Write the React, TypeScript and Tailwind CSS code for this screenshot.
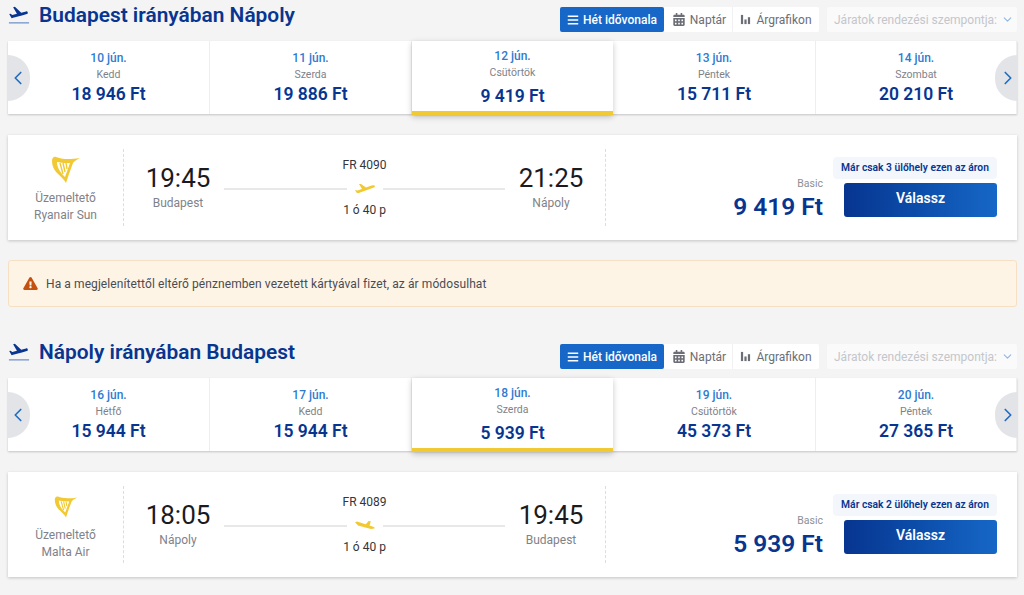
import { ChevronLeft, ChevronRight, ChevronDown } from "lucide-react";
import { FaBars, FaCalendarAlt, FaExclamationTriangle } from "react-icons/fa";

type Day = { date: string; name: string; price: string; active?: boolean };
type Flight = {
  operator: string;
  from: string;
  to: string;
  dep: string;
  arr: string;
  code: string;
  price: string;
  seats: string;
  landing?: boolean;
  logoSmall?: boolean;
};

const PLANE_UP =
  "M21.57 9.14c-.21-.8-1.04-1.28-1.84-1.06L14.42 9.5 7.52 3.07l-1.93.51 4.14 7.17-4.97 1.33-1.97-1.54-1.45.39 1.82 3.16.77 1.33 1.6-.43 5.31-1.42 4.35-1.16 5.31-1.42c.81-.23 1.28-1.05 1.07-1.85z";

function DepartureIcon() {
  return (
    <svg viewBox="0 0 24 24" className="w-[22px] h-[22px] text-[#073590] shrink-0" fill="currentColor">
      <path d={PLANE_UP} />
      <rect x="1" y="20" width="22" height="1.2" fill="#5b83c4" />
    </svg>
  );
}

function RoutePlane({ landing }: { landing?: boolean }) {
  return (
    <svg viewBox="0 0 24 12" className="w-[24px] h-[12px] text-[#f1c933]" fill="currentColor">
      {landing ? (
        <path d="M2 2.2L4 1.4L19.5 6.4Q22.4 7.4 21.4 8.6L18 9L5 5.4ZM15.6 1L17.8 1.3L16.4 6.2L12.2 5Z" />
      ) : (
        <path d="M2 7L4.6 7.6L18.6 2.6Q22 1.6 22 3.2Q22 4.4 19.6 5L5 10.2L3.4 9.6ZM6 1L8 1L13 4.4L9 6Z" />
      )}
    </svg>
  );
}

function Harp({ small }: { small?: boolean }) {
  return (
    <svg viewBox="0 0 30 30" className={small ? "w-[24px] h-[24px]" : "w-[30px] h-[30px]"} fill="none">
      <path d="M1 6C1 3 3 1 5 2c5 2 12 3 24 1-3 2-6 3-7 5l-4 11-3 9c-2-4-6-7-9-10-3-3-5-7-5-12z" fill="#f1c933" />
      <path d="M6 7c4 1 9 1 13 1l-5 14c-3-3-8-8-8-15z" fill="#fff" />
      <path d="M9 8l3 11M12 8l2 9M15 8l1 6" stroke="#f1c933" strokeWidth="1.4" />
    </svg>
  );
}

function Header({ title }: { title: string }) {
  return (
    <div className="h-[41px] flex items-start justify-between">
      <div className="flex items-center gap-[9px] -mt-[2px] h-[34px]">
        <DepartureIcon />
        <h2 className="text-[20.9px] font-semibold text-[#073590] leading-none">{title}</h2>
      </div>
      <div className="flex items-center pt-[7px] text-[12px]">
        <button className="h-[25px] w-[104px] rounded-[2px] bg-[#1667c7] text-white font-medium flex items-center justify-center gap-[4px]">
          <FaBars className="w-[12px] h-[12px]" />
          Hét idővonala
        </button>
        <button className="h-[25px] w-[69px] bg-white border-r border-[#f1f1f1] text-[#6b6e76] flex items-center justify-center gap-[5px] pl-[3px]">
          <FaCalendarAlt className="w-[12px] h-[13px]" />
          Naptár
        </button>
        <button className="h-[25px] w-[86px] bg-white rounded-r-[2px] text-[#6b6e76] flex items-center justify-center gap-[5px]">
          <svg viewBox="0 0 12 12" className="w-[11px] h-[11px]" fill="currentColor">
            <rect x="1" y="1" width="2.4" height="10" />
            <rect x="4.8" y="6" width="2.4" height="5" />
            <rect x="8.6" y="3.5" width="2.4" height="7.5" />
          </svg>
          Árgrafikon
        </button>
        <div className="h-[25px] w-[190px] ml-[8px] bg-[#fafafa] rounded-[2px] text-[#c4c6cb] flex items-center justify-between pl-[7px] pr-[3px]">
          <span className="whitespace-nowrap">Járatok rendezési szempontja:</span>
          <ChevronDown className="w-[13px] h-[13px] text-[#8fb7e6]" />
        </div>
      </div>
    </div>
  );
}

function DayCell({ day }: { day: Day }) {
  if (day.active) {
    return (
      <div className="relative z-10 h-[74px] flex flex-col items-center bg-white border-b-[4px] border-[#f1c933] shadow-[0_2px_6px_rgba(0,0,0,0.22)] pt-[7px]">
        <span className="text-[12px] leading-[16px] font-medium text-[#2f7bd1]">{day.date}</span>
        <span className="text-[10.5px] leading-[14px] mt-[2px] text-[#7f8289]">{day.name}</span>
        <span className="text-[17.5px] leading-[22px] mt-[5px] font-semibold text-[#073590]">{day.price}</span>
      </div>
    );
  }
  return (
    <div className="h-[73px] flex flex-col items-center pt-[9px] border-r border-[#eeeeee] last:border-r-0">
      <span className="text-[12px] leading-[16px] font-medium text-[#2f7bd1]">{day.date}</span>
      <span className="text-[10.5px] leading-[14px] mt-[2px] text-[#7f8289]">{day.name}</span>
      <span className="text-[17.5px] leading-[22px] mt-[1px] font-semibold text-[#073590]">{day.price}</span>
    </div>
  );
}

function DayStrip({ days }: { days: Day[] }) {
  return (
    <div className="relative h-[73px] grid grid-cols-[202px_202px_201px_203px_201px] bg-white shadow-[0_1px_2px_rgba(0,0,0,0.2)]">
      {days.map((d) => (
        <DayCell key={d.date} day={d} />
      ))}
      <button className="absolute z-20 left-0 top-[14px] h-[46px] w-[22px] rounded-r-full bg-[#e3e4e7] flex items-center justify-center">
        <ChevronLeft className="w-[22px] h-[22px] text-[#1f6cc4] -ml-[3px]" strokeWidth={1.8} />
      </button>
      <button className="absolute z-20 right-0 top-[14px] h-[46px] w-[22px] rounded-l-full bg-[#e3e4e7] flex items-center justify-center">
        <ChevronRight className="w-[22px] h-[22px] text-[#1f6cc4] -mr-[3px]" strokeWidth={1.8} />
      </button>
    </div>
  );
}

function FlightCard({ f }: { f: Flight }) {
  return (
    <div className="mt-[21px] h-[105px] bg-white shadow-[0_1px_3px_rgba(0,0,0,0.2)] flex items-stretch py-[14px]">
      <div className="w-[116px] flex flex-col items-center justify-end border-r border-dashed border-[#dddddd] text-[12px] leading-[17px] pb-[2px] text-[#7f8289]">
        <div className="flex-1 flex items-center justify-center">
          <Harp small={f.logoSmall} />
        </div>
        <span>Üzemeltető</span>
        <span>{f.operator}</span>
      </div>
      <div className="w-[482px] flex items-start border-r border-dashed border-[#dddddd]">
        <div className="w-[92px] ml-[8px] flex flex-col items-center pt-[14px]">
          <span className="text-[26px] leading-[30px] text-[#1b1b1f]">{f.dep}</span>
          <span className="text-[12px] leading-[16px] mt-[2px] text-[#7f8289]">{f.from}</span>
        </div>
        <div className="w-[281px] flex flex-col items-center pt-[8px] text-[12px] text-[#33353a]">
          <span className="leading-[16px]">{f.code}</span>
          <div className="w-full flex items-center gap-[6px] h-[22px] mt-[5px]">
            <div className="flex-1 h-[2px] bg-[#e8e8e8]" />
            <RoutePlane landing={f.landing} />
            <div className="flex-1 h-[2px] bg-[#e8e8e8]" />
          </div>
          <span className="leading-[16px] mt-[2px]">1 ó 40 p</span>
        </div>
        <div className="w-[92px] flex flex-col items-center pt-[14px]">
          <span className="text-[26px] leading-[30px] text-[#1b1b1f]">{f.arr}</span>
          <span className="text-[12px] leading-[16px] mt-[2px] text-[#7f8289]">{f.to}</span>
        </div>
      </div>
      <div className="flex-1 flex justify-end pr-[20px]">
        <div className="flex flex-col items-end pt-[28px] pr-[10px]">
          <span className="text-[10.5px] leading-[14px] text-[#8d9096]">Basic</span>
          <span className="text-[24.5px] leading-[28px] mt-[2px] font-semibold text-[#073590] whitespace-nowrap">{f.price}</span>
        </div>
        <div className="w-[164px] flex flex-col items-end pt-[8px]">
          <div className="w-[164px] h-[22px] rounded-[4px] bg-[#f3f7fc] text-[#073590] text-[10.3px] font-semibold flex items-center justify-center whitespace-nowrap">
            {f.seats}
          </div>
          <button className="w-[153px] h-[34px] mt-[4px] rounded-[3px] bg-gradient-to-r from-[#073590] to-[#1667c7] text-white text-[14px] font-semibold pb-[3px]">
            Válassz
          </button>
        </div>
      </div>
    </div>
  );
}

const outDays: Day[] = [
  { date: "10 jún.", name: "Kedd", price: "18 946 Ft" },
  { date: "11 jún.", name: "Szerda", price: "19 886 Ft" },
  { date: "12 jún.", name: "Csütörtök", price: "9 419 Ft", active: true },
  { date: "13 jún.", name: "Péntek", price: "15 711 Ft" },
  { date: "14 jún.", name: "Szombat", price: "20 210 Ft" },
];

const backDays: Day[] = [
  { date: "16 jún.", name: "Hétfő", price: "15 944 Ft" },
  { date: "17 jún.", name: "Kedd", price: "15 944 Ft" },
  { date: "18 jún.", name: "Szerda", price: "5 939 Ft", active: true },
  { date: "19 jún.", name: "Csütörtök", price: "45 373 Ft" },
  { date: "20 jún.", name: "Péntek", price: "27 365 Ft" },
];

export default function App() {
  return (
    <div className="w-[1024px] h-[595px] overflow-hidden bg-[#f4f4f4] pl-[8px] pr-[7px] font-['Roboto',sans-serif]">
      <Header title="Budapest irányában Nápoly" />
      <DayStrip days={outDays} />
      <FlightCard
        f={{
          operator: "Ryanair Sun",
          from: "Budapest",
          to: "Nápoly",
          dep: "19:45",
          arr: "21:25",
          code: "FR 4090",
          price: "9 419 Ft",
          seats: "Már csak 3 ülőhely ezen az áron",
        }}
      />

      {/* Card currency warning */}
      <div className="mt-[20px] h-[47px] rounded-[3px] bg-[#fef4e6] border border-[#f7dfc4] flex items-center gap-[8px] pl-[14px] text-[12px] tracking-[0.09px] text-[#4a4c52]">
        <FaExclamationTriangle className="w-[15px] h-[13px] text-[#c4510f]" />
        Ha a megjelenítettől eltérő pénznemben vezetett kártyával fizet, az ár módosulhat
      </div>

      <div className="mt-[30px]">
        <Header title="Nápoly irányában Budapest" />
      </div>
      <DayStrip days={backDays} />
      <FlightCard
        f={{
          operator: "Malta Air",
          from: "Nápoly",
          to: "Budapest",
          dep: "18:05",
          arr: "19:45",
          code: "FR 4089",
          price: "5 939 Ft",
          seats: "Már csak 2 ülőhely ezen az áron",
          landing: true,
          logoSmall: true,
        }}
      />
    </div>
  );
}
